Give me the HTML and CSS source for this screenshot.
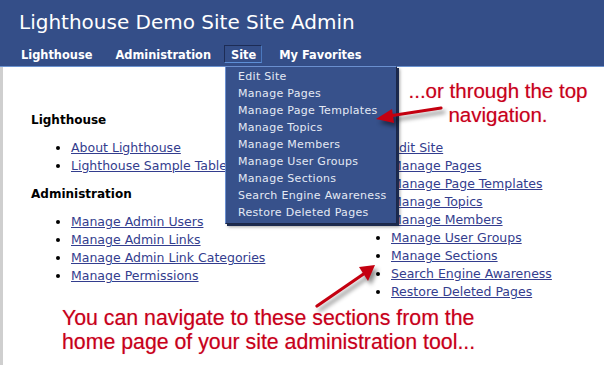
FILE: index.html
```html
<!DOCTYPE html>
<html>
<head>
<meta charset="utf-8">
<link rel="stylesheet" href="styles.css">
</head>
<body>
<div class="page">
  <header class="header">
    <h1 class="title">Lighthouse Demo Site Site Admin</h1>
    <nav class="nav">
      <span class="nav-item">Lighthouse</span>
      <span class="nav-item">Administration</span>
      <span class="nav-item nav-active">Site
        <ul class="dropdown">
          <li>Edit Site</li>
          <li>Manage Pages</li>
          <li>Manage Page Templates</li>
          <li>Manage Topics</li>
          <li>Manage Members</li>
          <li>Manage User Groups</li>
          <li>Manage Sections</li>
          <li>Search Engine Awareness</li>
          <li>Restore Deleted Pages</li>
        </ul>
      </span>
      <span class="nav-item">My Favorites</span>
    </nav>
  </header>
  <main class="content">
    <section class="col col-left">
      <h2 class="sec-title">Lighthouse</h2>
      <ul class="links">
        <li><a href="#">About Lighthouse</a></li>
        <li><a href="#">Lighthouse Sample Tables</a></li>
      </ul>
      <h2 class="sec-title">Administration</h2>
      <ul class="links">
        <li><a href="#">Manage Admin Users</a></li>
        <li><a href="#">Manage Admin Links</a></li>
        <li><a href="#">Manage Admin Link Categories</a></li>
        <li><a href="#">Manage Permissions</a></li>
      </ul>
    </section>
    <section class="col col-right">
      <h2 class="sec-title sec-hidden">Site</h2>
      <ul class="links">
        <li><a href="#">Edit Site</a></li>
        <li><a href="#">Manage Pages</a></li>
        <li><a href="#">Manage Page Templates</a></li>
        <li><a href="#">Manage Topics</a></li>
        <li><a href="#">Manage Members</a></li>
        <li><a href="#">Manage User Groups</a></li>
        <li><a href="#">Manage Sections</a></li>
        <li><a href="#">Search Engine Awareness</a></li>
        <li><a href="#">Restore Deleted Pages</a></li>
      </ul>
    </section>
  </main>

  <div class="note note-top">...or through the top<br>navigation.</div>
  <div class="note note-bottom">You can navigate to these sections from the<br>home page of your site administration tool...</div>

  <svg class="arrow arrow-top" width="70" height="30" viewBox="0 0 70 30">
    <line x1="66" y1="5" x2="14" y2="13" stroke="#c40010" stroke-width="3.2" stroke-linecap="round"/>
    <polygon points="1,16 17,6 19,20" fill="#c40010"/>
  </svg>
  <svg class="arrow arrow-bottom" width="70" height="50" viewBox="0 0 70 50">
    <line x1="4" y1="44" x2="52" y2="11" stroke="#c40010" stroke-width="3.2" stroke-linecap="round"/>
    <polygon points="62,3 46,5 55,19" fill="#c40010"/>
  </svg>
</div>
</body>
</html>
```
FILE: styles.css
```css
html, body {
  margin: 0;
  padding: 0;
  background: #ffffff;
}
.page {
  position: relative;
  width: 604px;
  height: 367px;
  overflow: hidden;
  font-family: "DejaVu Sans", Verdana, sans-serif;
}
.header {
  background: #344e88;
  height: 66px;
  border-bottom: 1px solid #6b93d0;
  display: flex;
  flex-direction: column;
}
.title {
  margin: 0;
  padding: 10px 0 0 19px;
  height: 45px;
  flex: none;
  box-sizing: border-box;
  font-size: 20px;
  font-weight: normal;
  line-height: 24px;
  color: #ffffff;
}
.nav {
  display: flex;
  padding-left: 20px;
  font-size: 11.4px;
  font-weight: bold;
  color: #ffffff;
  line-height: 14px;
}
.nav-item {
  position: relative;
  margin-right: 21px;
  padding: 2px 0 0;
  border: 1px solid transparent;
  white-space: nowrap;
}
.nav-active {
  padding: 2px 5px 0 6px;
  margin-left: -9px;
  margin-right: 16px;
  border-color: #1d2c55;
  border-bottom-color: #5d8fd6;
  border-right-color: #4b78bd;
}
.dropdown {
  position: absolute;
  left: 0;
  top: 20px;
  margin: 0;
  padding: 1px 0 2px 12px;
  width: 158px;
  list-style: none;
  background: #37518b;
  border: 1px solid #1b2748;
  border-left-color: #6a8fcf;
  border-top-color: #6a8fcf;
  box-shadow: 2px 2px 0 #1c2a4e, 3px 3px 3px rgba(0,0,0,0.35);
  font-size: 11px;
  letter-spacing: 0.3px;
  font-weight: normal;
  line-height: 17px;
  color: #e4e9f4;
  white-space: nowrap;
  z-index: 5;
}
.content {
  border-left: 3px solid #cfcfcf;
  height: 298px;
  display: flex;
  padding: 44px 0 0 28px;
  box-sizing: border-box;
}
.col-left {
  width: 317px;
}
.sec-title {
  margin: 0;
  font-size: 12px;
  font-weight: bold;
  line-height: 18px;
  color: #000000;
}
.sec-hidden {
  visibility: hidden;
}
.links {
  margin: 10px 0 10px 0;
  padding-left: 40px;
  font-size: 12.5px;
  line-height: 18px;
}
.links a {
  color: #333d8e;
  text-decoration: underline;
}
.col-right .links {
  padding-left: 43px;
}
.note {
  position: absolute;
  font-family: "Liberation Sans", Arial, sans-serif;
  color: #c8001a;
  line-height: 24px;
  text-shadow: 0 0 1px rgba(200,0,40,0.4);
}
.note-top {
  left: 398px;
  top: 79px;
  width: 200px;
  font-size: 20.5px;
  text-align: center;
}
.note-bottom {
  left: 62px;
  top: 306px;
  font-size: 21.3px;
  white-space: nowrap;
}
.arrow {
  position: absolute;
  overflow: visible;
  filter: drop-shadow(3px 4px 2px rgba(0,0,0,0.45));
  z-index: 6;
}
.arrow-top {
  left: 375px;
  top: 103px;
}
.arrow-bottom {
  left: 313px;
  top: 262px;
}
```
